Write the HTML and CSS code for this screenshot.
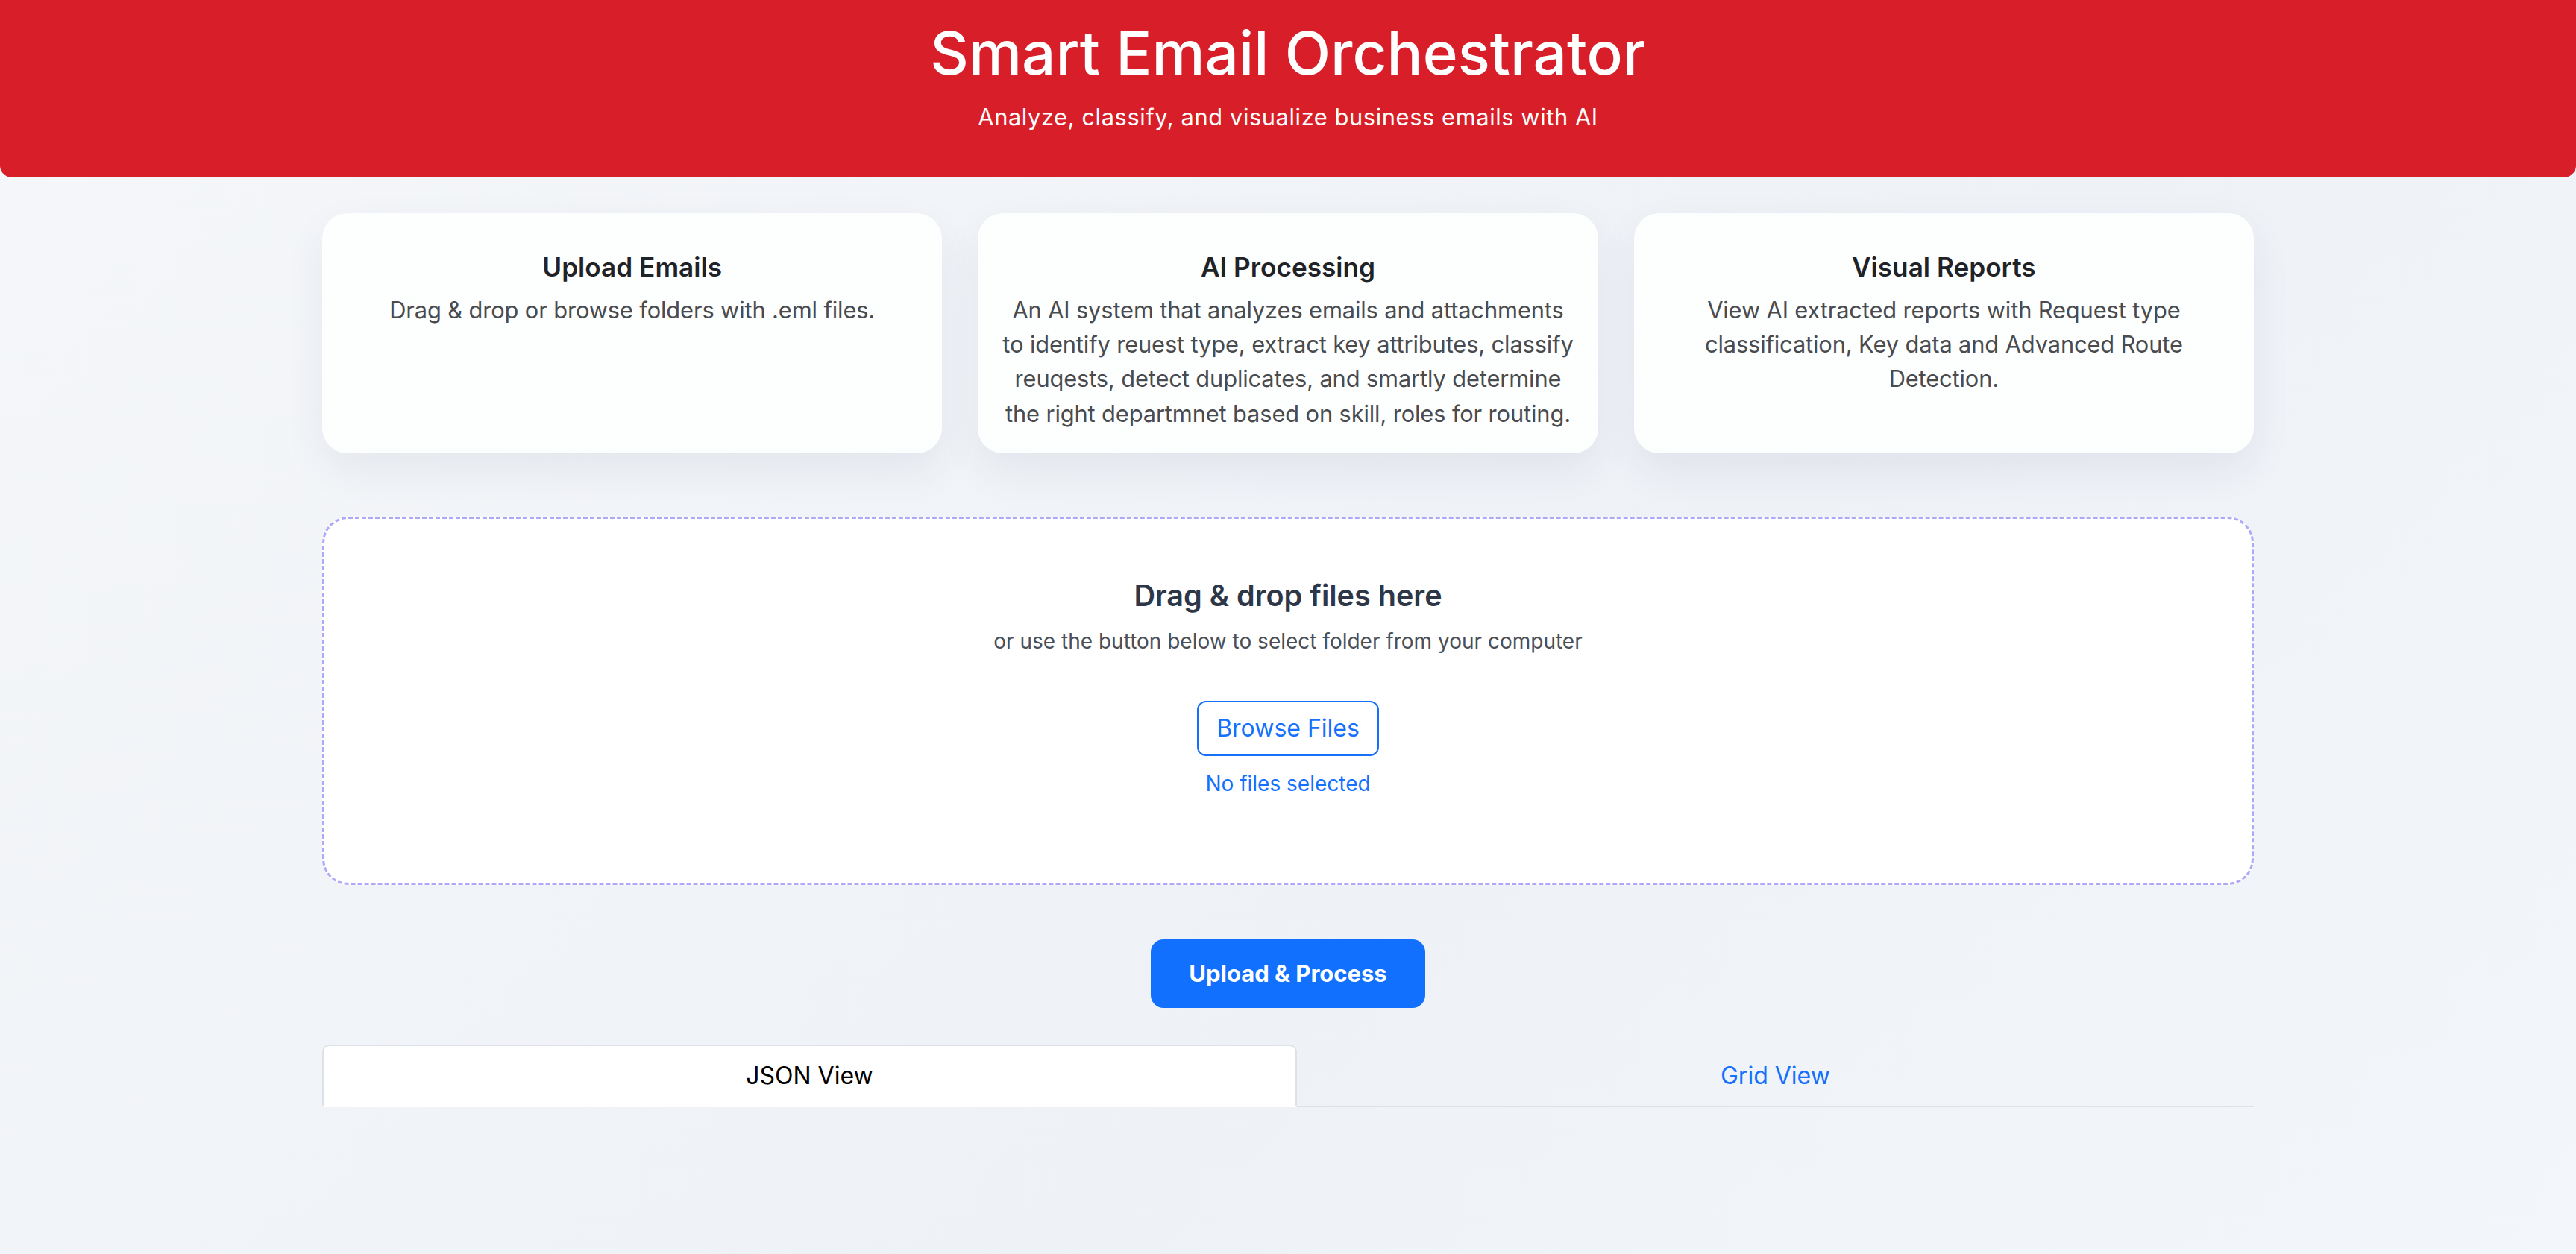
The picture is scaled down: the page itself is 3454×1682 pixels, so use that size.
FILE: index.html
```html
<!DOCTYPE html>
<html lang="en">
<head>
<meta charset="utf-8">
<title>Smart Email Orchestrator</title>
<link rel="stylesheet" href="styles.css">
</head>
<body>
<header class="hero">
  <h1 class="hero-title">Smart Email Orchestrator</h1>
  <p class="hero-sub">Analyze, classify, and visualize business emails with AI</p>
</header>
<main class="container">
  <section class="features">
    <div class="feature-card">
      <h3 class="feature-title">Upload Emails</h3>
      <p class="feature-text">Drag &amp; drop or browse folders with .eml files.</p>
    </div>
    <div class="feature-card">
      <h3 class="feature-title">AI Processing</h3>
      <p class="feature-text">An AI system that analyzes emails and attachments to identify reuest type, extract key attributes, classify reuqests, detect duplicates, and smartly determine the right departmnet based on skill, roles for routing.</p>
    </div>
    <div class="feature-card">
      <h3 class="feature-title">Visual Reports</h3>
      <p class="feature-text">View AI extracted reports with Request type classification, Key data and Advanced Route Detection.</p>
    </div>
  </section>

  <section class="dropzone">
    <h4 class="drop-title">Drag &amp; drop files here</h4>
    <p class="drop-hint">or use the button below to select folder from your computer</p>
    <button class="browse-btn" type="button">Browse Files</button>
    <p class="file-status">No files selected</p>
  </section>

  <div class="actions">
    <button class="process-btn" type="button">Upload &amp; Process</button>
  </div>

  <nav class="tabs">
    <a class="tab tab-active">JSON View</a>
    <a class="tab">Grid View</a>
  </nav>
</main>
</body>
</html>
```
FILE: styles.css
```css
* { box-sizing: border-box; }

html, body {
  margin: 0;
  padding: 0;
}

body {
  min-height: 100vh;
  font-family: Inter, "Noto Sans", "Liberation Sans", sans-serif;
  background: linear-gradient(135deg, #f5f7fa 0%, #eef1f6 60%, #f3f6fa 100%);
  color: #212529;
}

.hero {
  background: #d81e28;
  color: #fff;
  text-align: center;
  padding: 23px 0 23px;
  border-radius: 0 0 16px 16px;
}

.hero-title {
  margin: 0 0 15px;
  font-size: 80px;
  font-weight: 500;
  line-height: 96px;
}

.hero-sub {
  margin: 0 0 35px;
  font-size: 30.8px;
  line-height: 46px;
  letter-spacing: 0.6px;
}

.container {
  width: 2590px;
  margin: 0 auto;
  padding-top: 48px;
}

.features {
  display: grid;
  grid-template-columns: repeat(3, 1fr);
  gap: 48px;
}

.feature-card {
  background: #fdfefe;
  border-radius: 34px;
  padding: 51px 28px 30px;
  text-align: center;
  box-shadow: 0 22px 55px rgba(40, 50, 90, 0.07);
}

.feature-title {
  margin: 0 0 14px;
  font-size: 35.2px;
  font-weight: 600;
  line-height: 42px;
  color: #1f2226;
}

.feature-text {
  margin: 0;
  font-size: 30.8px;
  line-height: 46.2px;
  letter-spacing: -0.12px;
  color: #494b4f;
}

.dropzone {
  margin-top: 85px;
  background: #fff;
  border: 3px dashed #afa7f7;
  border-radius: 35px;
  padding: 80px 40px 112px;
  display: flex;
  flex-direction: column;
  align-items: center;
  text-align: center;
}

.drop-title {
  margin: 0 0 16px;
  font-size: 39.6px;
  font-weight: 600;
  line-height: 47.5px;
  color: #2d3748;
}

.drop-hint {
  margin: 0 0 59px;
  font-size: 28px;
  line-height: 42px;
  color: #4a4f58;
}

.browse-btn {
  font-family: inherit;
  font-size: 32px;
  line-height: 48px;
  color: #1470fd;
  background: #fff;
  border: 2px solid #1470fd;
  border-radius: 12px;
  padding: 11px 24px;
  cursor: pointer;
}

.file-status {
  margin: 16px 0 0;
  font-size: 28px;
  line-height: 42px;
  color: #1470fd;
}

.actions {
  display: flex;
  justify-content: center;
  margin-top: 73px;
}

.process-btn {
  font-family: inherit;
  font-size: 31px;
  font-weight: 700;
  line-height: 46px;
  color: #fff;
  background: #1270fe;
  border: none;
  border-radius: 17px;
  padding: 23px 51px;
  cursor: pointer;
}

.tabs {
  display: flex;
  margin-top: 49px;
  border-bottom: 2px solid #dee2e6;
}

.tab {
  flex: 1 1 auto;
  text-align: center;
  font-size: 32px;
  line-height: 48px;
  padding: 16px 35px;
  color: #1470fd;
  border: 2px solid transparent;
  border-radius: 10px 10px 0 0;
  margin-bottom: -2px;
}

.tab-active {
  color: #000;
  background: #fff;
  border-color: #dee2e6 #dee2e6 #fff;
}
```
